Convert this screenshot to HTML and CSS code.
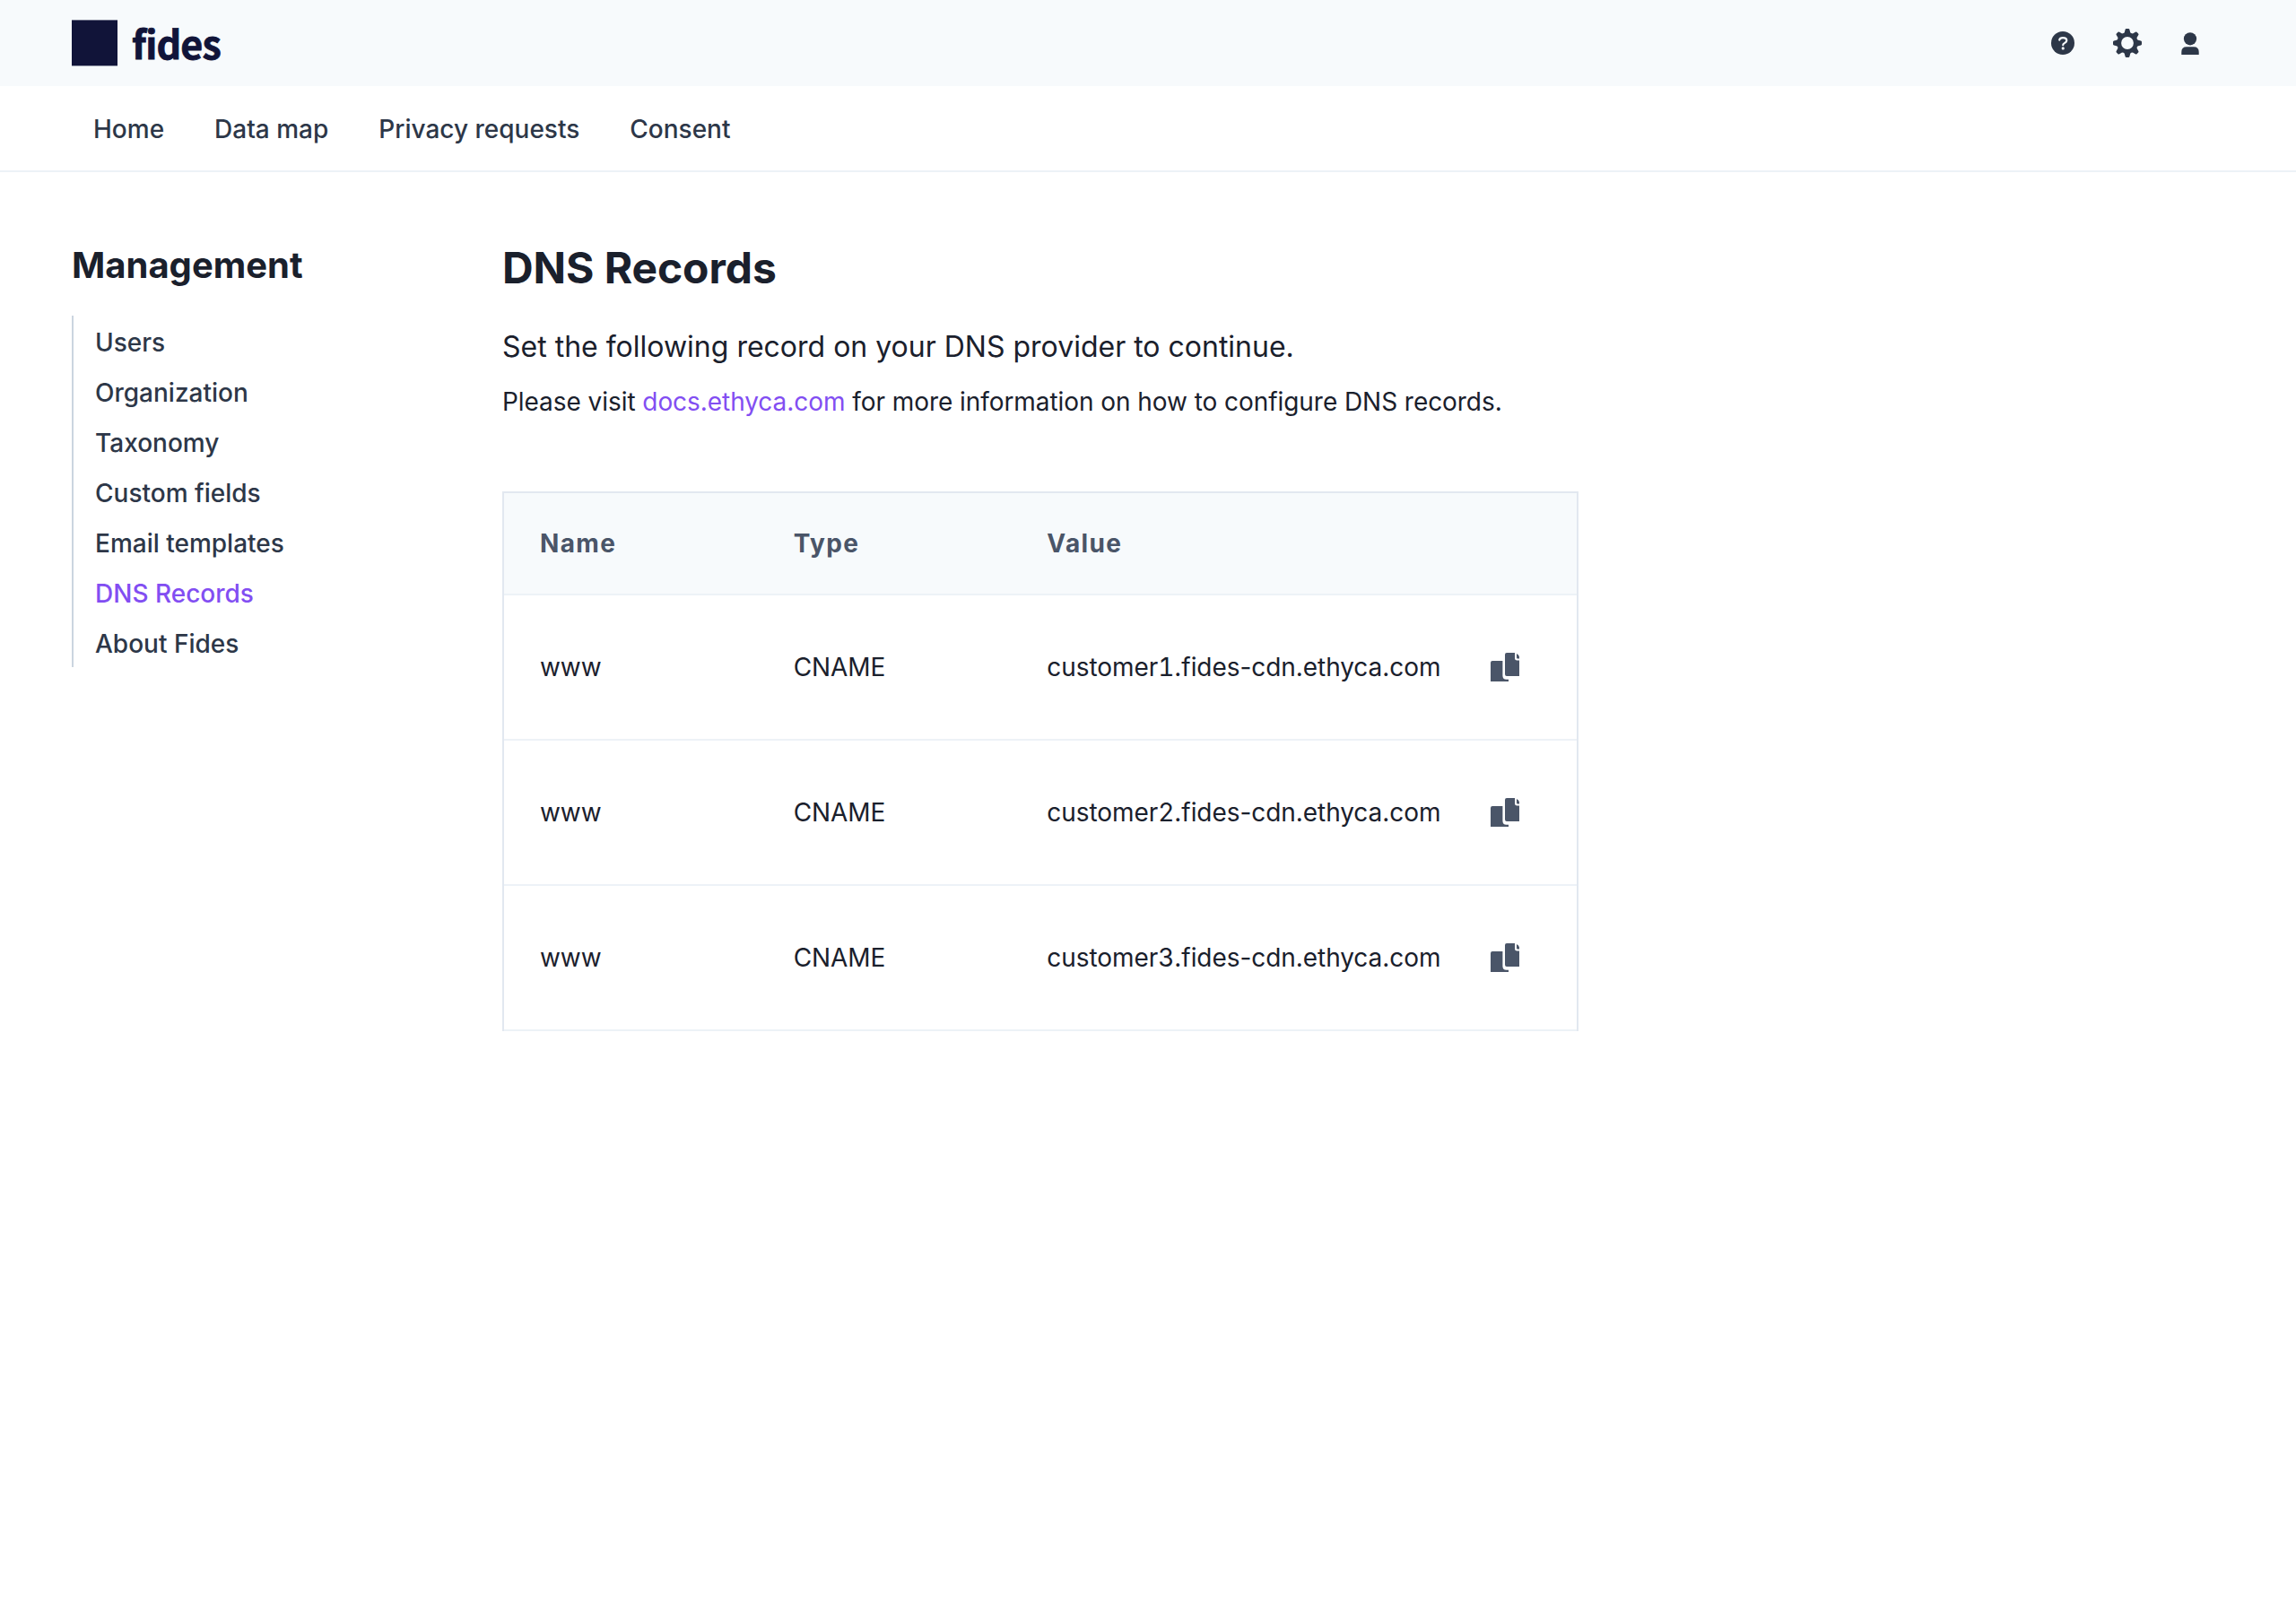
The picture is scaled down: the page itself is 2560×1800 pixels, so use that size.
FILE: index.html
```html
<!DOCTYPE html>
<html lang="en">
<head>
<meta charset="utf-8">
<title>DNS Records</title>
<link rel="stylesheet" href="styles.css">
</head>
<body>
<svg class="sprite" aria-hidden="true">
  <symbol id="copy" viewBox="0 0 32 32">
    <path d="M2 9H13.4V25.5Q13.4 29.7 17.6 29.7H20V32H0V11Q0 9 2 9Z"/>
    <path d="M18 0H27V6.2Q27 8.6 29.400 8.600H32V26H18Q16 26 16 24V2Q16 0 18 0Z"/>
    <path d="M29 1Q31.6 2 32 4.600V6.600H30Q29 6.600 29 5.600Z"/>
  </symbol>
</svg>
<header class="header">
  <div class="logo"><svg class="logo-mark" viewBox="0 0 51 52"><rect y="0.400" width="51" height="51" fill="currentColor"/></svg><span class="logo-text">fides</span></div>
  <div class="tools">
    <svg class="icon-help" viewBox="0 0 26 26"><circle cx="13" cy="13" r="13" fill="currentColor"/><path d="M9.200 9.600C9.600 7.900 11 7.200 13 7.200C15.600 7.200 17.300 8.400 17.300 10.300C17.300 13 13.200 12.700 13.200 15.200" fill="none" stroke="#f7fafc" stroke-width="2.200" stroke-linecap="round"/><circle cx="13.200" cy="18.900" r="1.600" fill="#f7fafc"/></svg>
    <svg class="icon-gear" viewBox="-16 -16 32 32"><g fill="currentColor"><g id="teeth"><path id="tooth" d="M-4.400 -9.500Q-2.900 -12 -2.400 -15Q-2.200 -16 -1.200 -16H1.200Q2.200 -16 2.400 -15Q2.900 -12 4.400 -9.500Z"/><use href="#tooth" transform="rotate(90)"/><use href="#tooth" transform="rotate(180)"/><use href="#tooth" transform="rotate(270)"/></g><use href="#teeth" transform="rotate(45)"/></g><circle r="9.300" fill="none" stroke="currentColor" stroke-width="4.800"/></svg>
    <svg class="icon-user" viewBox="0 0 20 26"><circle cx="10" cy="7.300" r="7.100" fill="currentColor"/><path d="M.3 25V22Q.3 16.300 6 16.300H14Q19.700 16.300 19.700 22V25Z" fill="currentColor"/></svg>
  </div>
</header>
<nav class="nav"><a>Home</a><a>Data map</a><a>Privacy requests</a><a>Consent</a></nav>
<div class="page">
  <aside class="sidebar">
    <h2>Management</h2>
    <ul class="menu">
      <li>Users</li><li>Organization</li><li>Taxonomy</li><li>Custom fields</li><li>Email templates</li><li class="active">DNS Records</li><li>About Fides</li>
    </ul>
  </aside>
  <main class="main">
    <h1>DNS Records</h1>
    <p class="lead">Set the following record on your DNS provider to continue.</p>
    <p class="note">Please visit <a class="link">docs.ethyca.com</a> for more information on how to configure DNS records.</p>
    <div class="table">
      <div class="row head"><span>Name</span><span>Type</span><span>Value</span></div>
      <div class="row"><span>www</span><span>CNAME</span><span>customer<span class="num">1</span>.fides-cdn.ethyca.com</span><svg class="copy"><use href="#copy"/></svg></div>
      <div class="row"><span>www</span><span>CNAME</span><span>customer<span class="num">2</span>.fides-cdn.ethyca.com</span><svg class="copy"><use href="#copy"/></svg></div>
      <div class="row"><span>www</span><span>CNAME</span><span>customer<span class="num">3</span>.fides-cdn.ethyca.com</span><svg class="copy"><use href="#copy"/></svg></div>
    </div>
  </main>
</div>
</body>
</html>
```
FILE: styles.css
```css
* { box-sizing: border-box; }
body { margin: 0; background: #fff; color: #1a202c; font-family: Inter, "Liberation Sans", sans-serif; font-size: 28px; }
h1, h2, p, ul { margin: 0; padding: 0; }
.sprite { display: none; }
.header { height: 96px; padding: 0 108px 0 80px; background: #f7fafc; display: flex; align-items: center; justify-content: space-between; }
.logo { display: flex; align-items: center; gap: 16px; color: #111439; }
.logo-mark { width: 51px; height: 52px; }
.logo-text { font: 700 43px/60px "Noto Sans CJK JP", sans-serif; letter-spacing: -0.8px; -webkit-text-stroke: 0.8px #111439; padding-bottom: 2px; }
.tools { display: flex; align-items: center; color: #2d3748; }
.icon-help { width: 26px; height: 26px; margin-right: 43px; }
.icon-gear { width: 32px; height: 32px; margin-right: 44px; }
.icon-user { width: 20px; height: 26px; margin-top: 2px; }
.nav { height: 96px; padding: 2px 104px 0; border-bottom: 2px solid #edf2f7; display: flex; align-items: center; gap: 56px; color: #2d3748; font-weight: 500; line-height: 40px; }
.page { display: flex; padding: 0 80px; }
.sidebar { width: 480px; padding-top: 80px; }
.sidebar h2 { font-size: 40px; line-height: 48px; margin-bottom: 32px; }
.menu { list-style: none; border-left: 2px solid #cbd5e0; padding-left: 24px; color: #2d3748; font-weight: 500; }
.menu li { padding: 10px 0 6px; line-height: 40px; }
.menu .active, .link { color: #824ef2; }
.main { width: 1200px; padding-top: 78px; }
.main h1 { font-size: 48px; line-height: 58px; letter-spacing: -0.1px; }
.lead { font-size: 32px; line-height: 48px; margin-top: 35px; }
.note { line-height: 40px; margin: 17px 0 80px; letter-spacing: -0.06px; }
.table { border: 2px solid #e2e8f0; border-bottom: 0; }
.row { display: grid; grid-template-columns: 282.670px 282.670px 495px 32px; align-items: center; padding-left: 40px; height: 162px; border-bottom: 2px solid #edf2f7; line-height: 40px; letter-spacing: -0.06px; }
.head { height: 114px; background: #f7fafc; color: #4a5568; font-weight: 700; letter-spacing: 0.048em; }
.num { font-variant-numeric: lining-nums tabular-nums; }
.copy { width: 32px; height: 32px; fill: #4a5568; }
```
